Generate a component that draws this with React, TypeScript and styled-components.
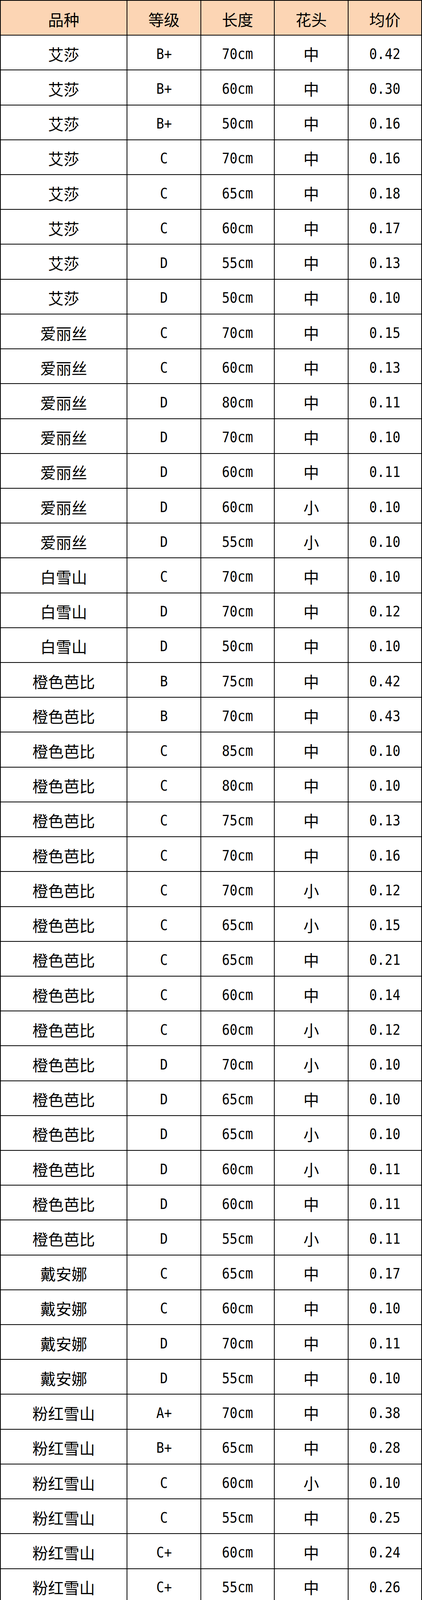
import React from "react"
import styled, { createGlobalStyle } from "styled-components"

type Row = [string, string, string, string, string]

const rows: Row[] = [
    ["艾莎", "B+", "70cm", "中", "0.42"],
    ["艾莎", "B+", "60cm", "中", "0.30"],
    ["艾莎", "B+", "50cm", "中", "0.16"],
    ["艾莎", "C", "70cm", "中", "0.16"],
    ["艾莎", "C", "65cm", "中", "0.18"],
    ["艾莎", "C", "60cm", "中", "0.17"],
    ["艾莎", "D", "55cm", "中", "0.13"],
    ["艾莎", "D", "50cm", "中", "0.10"],
    ["爱丽丝", "C", "70cm", "中", "0.15"],
    ["爱丽丝", "C", "60cm", "中", "0.13"],
    ["爱丽丝", "D", "80cm", "中", "0.11"],
    ["爱丽丝", "D", "70cm", "中", "0.10"],
    ["爱丽丝", "D", "60cm", "中", "0.11"],
    ["爱丽丝", "D", "60cm", "小", "0.10"],
    ["爱丽丝", "D", "55cm", "小", "0.10"],
    ["白雪山", "C", "70cm", "中", "0.10"],
    ["白雪山", "D", "70cm", "中", "0.12"],
    ["白雪山", "D", "50cm", "中", "0.10"],
    ["橙色芭比", "B", "75cm", "中", "0.42"],
    ["橙色芭比", "B", "70cm", "中", "0.43"],
    ["橙色芭比", "C", "85cm", "中", "0.10"],
    ["橙色芭比", "C", "80cm", "中", "0.10"],
    ["橙色芭比", "C", "75cm", "中", "0.13"],
    ["橙色芭比", "C", "70cm", "中", "0.16"],
    ["橙色芭比", "C", "70cm", "小", "0.12"],
    ["橙色芭比", "C", "65cm", "小", "0.15"],
    ["橙色芭比", "C", "65cm", "中", "0.21"],
    ["橙色芭比", "C", "60cm", "中", "0.14"],
    ["橙色芭比", "C", "60cm", "小", "0.12"],
    ["橙色芭比", "D", "70cm", "小", "0.10"],
    ["橙色芭比", "D", "65cm", "中", "0.10"],
    ["橙色芭比", "D", "65cm", "小", "0.10"],
    ["橙色芭比", "D", "60cm", "小", "0.11"],
    ["橙色芭比", "D", "60cm", "中", "0.11"],
    ["橙色芭比", "D", "55cm", "小", "0.11"],
    ["戴安娜", "C", "65cm", "中", "0.17"],
    ["戴安娜", "C", "60cm", "中", "0.10"],
    ["戴安娜", "D", "70cm", "中", "0.11"],
    ["戴安娜", "D", "55cm", "中", "0.10"],
    ["粉红雪山", "A+", "70cm", "中", "0.38"],
    ["粉红雪山", "B+", "65cm", "中", "0.28"],
    ["粉红雪山", "C", "60cm", "小", "0.10"],
    ["粉红雪山", "C", "55cm", "中", "0.25"],
    ["粉红雪山", "C+", "60cm", "中", "0.24"],
    ["粉红雪山", "C+", "55cm", "中", "0.26"],
    ["粉红雪山", "D", "65cm", "中", "0.11"],
    ["粉红雪山", "D", "60cm", "中", "0.11"],
    ["粉红雪山", "D", "55cm", "中", "0.12"],
    ["粉红雪山", "D", "55cm", "小", "0.10"],
    ["粉红雪山", "D", "40cm", "小", "0.11"],
    ["粉红雪山", "D+", "50cm", "中", "0.15"],
    ["粉红雪山", "D+", "45cm", "中", "0.21"],
    ["粉红雪山", "D+", "40cm", "中", "0.16"],
    ["粉荔枝", "B+", "70cm", "小", "0.62"],
    ["粉荔枝", "B+", "60cm", "小", "0.62"],
    ["粉荔枝", "C", "75cm", "中", "0.20"],
    ["粉荔枝", "C", "70cm", "中", "0.17"],
    ["粉荔枝", "C", "65cm", "中", "0.11"],
    ["粉荔枝", "D", "75cm", "中", "0.11"],
    ["粉荔枝", "D", "70cm", "中", "0.10"],
    ["粉荔枝", "D", "65cm", "中", "0.10"],
    ["弗洛伊德", "B+", "80cm", "小", "0.63"],
    ["弗洛伊德", "B+", "70cm", "小", "0.60"],
    ["弗洛伊德", "C", "80cm", "中", "0.20"],
    ["弗洛伊德", "C", "65cm", "中", "0.24"],
]

const headers = ["品种", "等级", "长度", "花头", "均价"]

// grade, length and price are set in the narrow latin face
const latinCols = [false, true, true, false, true]

export default function App() {
    return (
        <>
            <GlobalStyle />
            <Table>
                {headers.map((h) => (
                    <Cell key={h} $head>
                        <Text>{h}</Text>
                    </Cell>
                ))}
                {rows.map((row, i) =>
                    row.map((value, j) => (
                        <Cell key={i + '-' + j}>
                            <Text $latin={latinCols[j]}>{value}</Text>
                        </Cell>
                    ))
                )}
            </Table>
        </>
    )
}

const GlobalStyle = createGlobalStyle`
    html, body {
        margin: 0;
        padding: 0;
        background: #ffffff;
    }
    * {
        box-sizing: border-box;
    }
`

const Table = styled.div`
    display: grid;
    grid-template-columns: 324px 189px 188px 189px 188px;
    grid-template-rows: repeat(66, 1fr);
    width: 1080px;
    height: 5890px;
    border-top: 2px solid #000;
    border-left: 2px solid #000;
    font-family: "Noto Sans CJK SC", "Noto Sans", sans-serif;
    color: #000;
`

const Cell = styled.div<{ $head?: boolean }>`
    display: flex;
    align-items: center;
    justify-content: center;
    padding-top: 6px;
    border-right: 2px solid #000;
    border-bottom: 2px solid #000;
    background: ${(p) => (p.$head ? "#fcd5b4" : "#ffffff")};
    overflow: hidden;
`

const Text = styled.span<{ $latin?: boolean }>`
    display: inline-block;
    white-space: pre;
    font-size: ${(p) => (p.$latin ? "38px" : "40px")};
    line-height: 1;
    font-family: ${(p) =>
        p.$latin
            ? '"DejaVu Sans Mono", "Liberation Mono", monospace'
            : '"Noto Sans CJK SC", "Noto Sans", sans-serif'};
    transform: ${(p) => (p.$latin ? "scaleX(0.87)" : "none")};
`
